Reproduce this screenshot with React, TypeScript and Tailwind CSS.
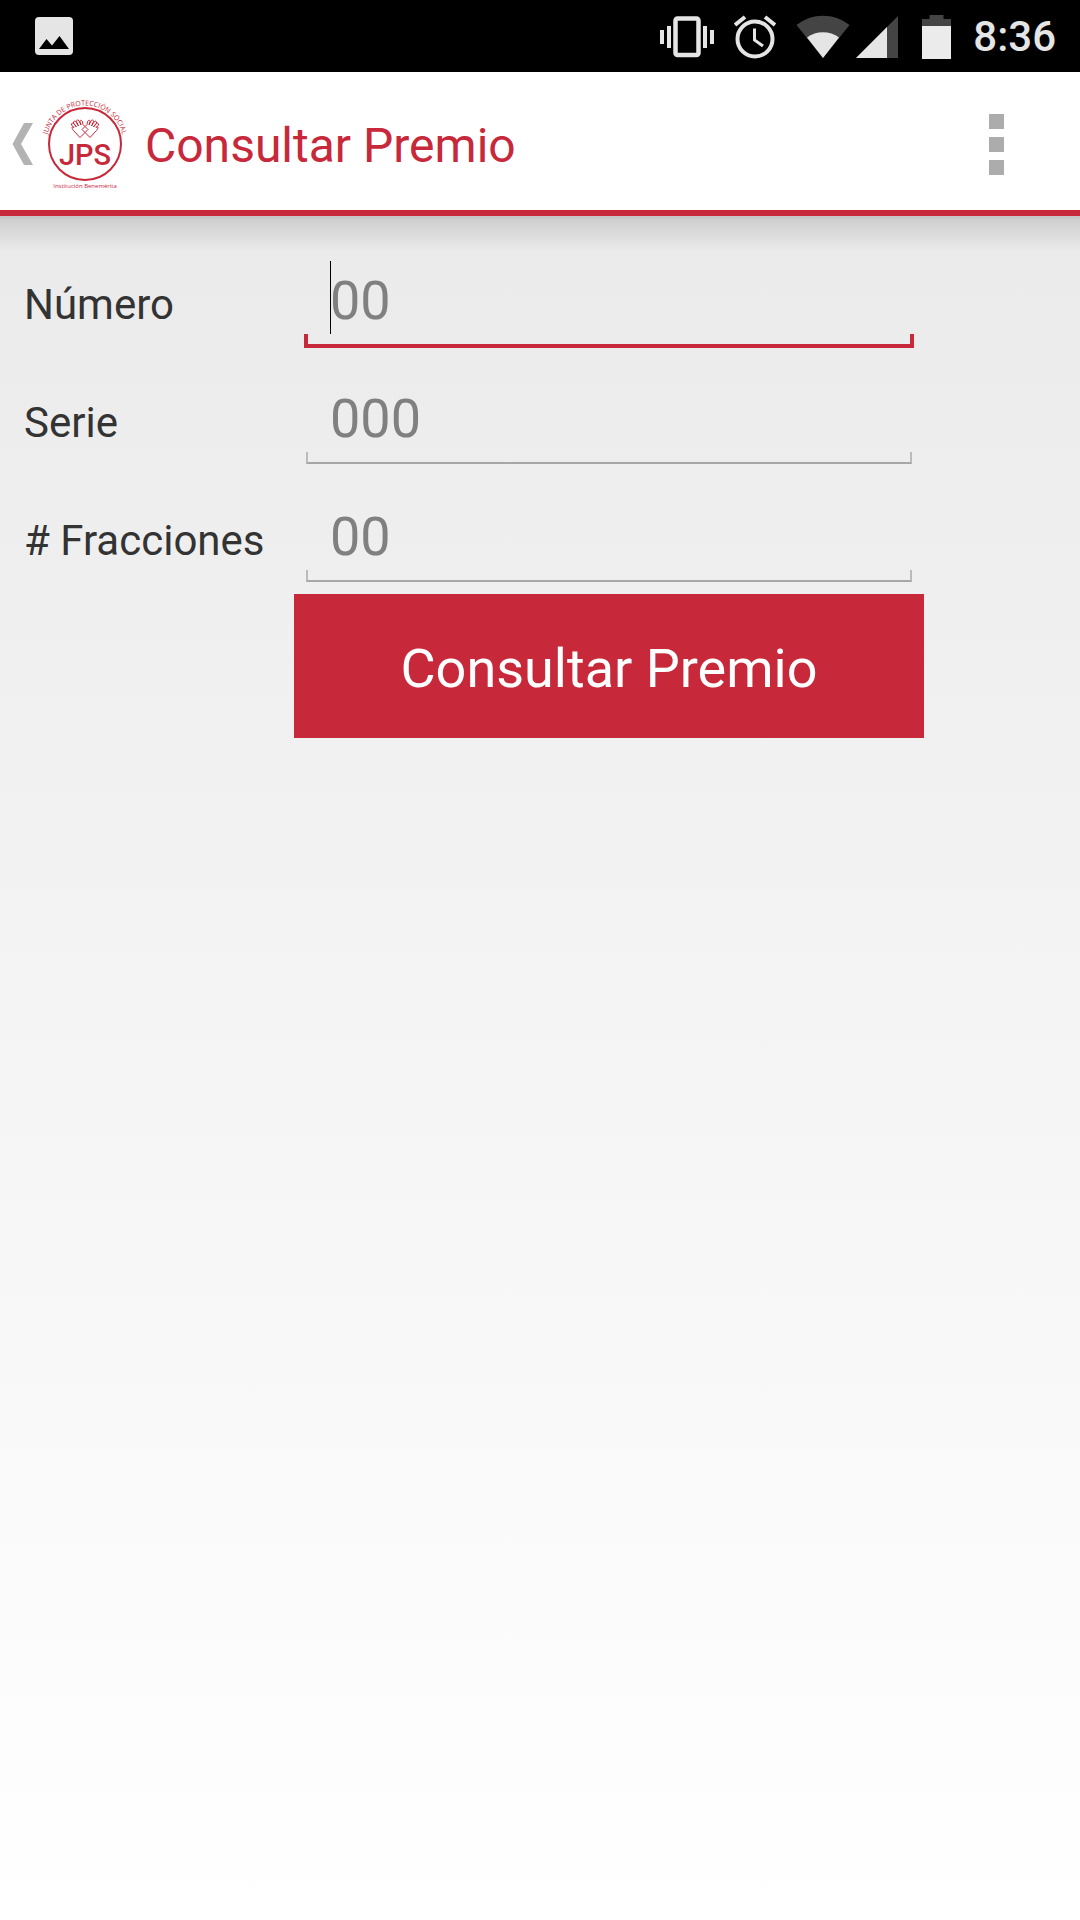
import React from "react";

const RED = "#c7283a";

function PictureIcon() {
  return (
    <svg width="38" height="38" viewBox="0 0 38 38" aria-hidden="true">
      <rect width="38" height="38" rx="4" fill="#e5e5e5" />
      <path d="M4 32 L11.500 22 L17 28.500 L24.500 19 L34 32 Z" fill="#000" />
    </svg>
  );
}

function VibrateIcon() {
  return (
    <svg width="54" height="42" viewBox="0 0 54 42" fill="#e5e5e5" aria-hidden="true">
      <rect x="0" y="14" width="4" height="14" />
      <rect x="7" y="10" width="4" height="22" />
      <rect x="43" y="10" width="4" height="22" />
      <rect x="50" y="14" width="4" height="14" />
      <rect x="15.500" y="2.500" width="23" height="36.500" rx="2" fill="none" stroke="#e5e5e5" strokeWidth="4.500" />
    </svg>
  );
}

function AlarmIcon() {
  return (
    <svg width="42" height="44" viewBox="0 0 42 44" fill="none" stroke="#e5e5e5" strokeWidth="4" aria-hidden="true">
      <circle cx="21" cy="24" r="17.500" />
      <path d="M1 10 L11 2 M31 2 L41 10" />
      <path d="M20.500 13.500 V25 L29 31" strokeWidth="3" />
    </svg>
  );
}

function WifiIcon() {
  return (
    <svg width="54" height="44" viewBox="0 0 54 44" aria-hidden="true">
      <path d="M0.500 10 C16 -2.500 38 -2.500 53.500 10 L27 43 Z" fill="#444" />
      <path d="M11 22.500 C20 15.500 34 15.500 43 22.500 L27 43 Z" fill="#e5e5e5" />
    </svg>
  );
}

function SignalIcon() {
  return (
    <svg width="42" height="42" viewBox="0 0 42 42" aria-hidden="true">
      <path d="M42 0 V42 H0 Z" fill="#444" />
      <path d="M31 11 V42 H0 Z" fill="#e5e5e5" />
    </svg>
  );
}

function BatteryIcon() {
  return (
    <svg width="29" height="44" viewBox="0 0 29 44" aria-hidden="true">
      <path d="M7.500 0 H21.500 V4 H29 V11 H0 V4 H7.500 Z" fill="#444" />
      <rect y="11" width="29" height="33" fill="#ebebeb" />
    </svg>
  );
}

function Hand() {
  return (
    <path d="M45 36.500 L40 41.500 L33.500 34.500 C31 31.500 32 30 34 31.500 L31.500 29 C31 27 33 26.500 34 28 L36.500 31 L33.500 27 C33 25 35 24.500 36 26 L38.500 30 L36.500 25.500 C36.500 23.500 38.500 23.500 39 25 L41 29 L40 25.500 C40 23.500 42 24 42.500 26 L43 28.500 L45 30.500 L42 33.500 L45 36.500" />
  );
}

function Logo() {
  return (
    <svg width="90" height="96" viewBox="0 0 90 96" role="img" aria-label="JPS" fill={RED}>
      <defs>
        <path id="logo-arc" d="M17.800 75.200 A38.500 38.500 0 1 1 72.200 75.200" />
      </defs>
      <circle cx="45" cy="48" r="36" fill="none" stroke={RED} strokeWidth="2" />
      <text fontSize="7" className="font-['Open_Sans']">
        <textPath href="#logo-arc" startOffset="50%" textAnchor="middle">
          JUNTA DE PROTECCIÓN SOCIAL
        </textPath>
      </text>
      <g fill="none" stroke={RED} strokeWidth="1" strokeLinejoin="round">
        <Hand />
        <g transform="matrix(-1 0 0 1 90 0)">
          <Hand />
        </g>
      </g>
      <text x="45" y="69" fontSize="29" textAnchor="middle" className="font-['Roboto'] font-medium">
        JPS
      </text>
      <text x="45" y="92" fontSize="6" textAnchor="middle" className="font-['Open_Sans']">
        Institución Benemérita
      </text>
    </svg>
  );
}

function StatusBar() {
  return (
    <div className="flex h-[72px] items-center justify-between bg-black pr-6 pl-[35px] text-[#e5e5e5]">
      <PictureIcon />
      <div className="flex items-center pt-0.5">
        <VibrateIcon />
        <div className="ml-5">
          <AlarmIcon />
        </div>
        <div className="ml-5">
          <WifiIcon />
        </div>
        <div className="ml-1.5">
          <SignalIcon />
        </div>
        <div className="ml-6">
          <BatteryIcon />
        </div>
        <span className="ml-[22px] text-[42px] leading-[50px] font-medium">8:36</span>
      </div>
    </div>
  );
}

function AppBar() {
  return (
    <header className="relative z-10 flex h-36 items-center border-b-6 border-[#c7283a] bg-white pt-1.5">
      <button type="button" aria-label="Volver" className="flex items-center pl-3">
        <svg width="22" height="42" viewBox="0 0 22 42" aria-hidden="true">
          <path d="M12 0 H21 L9 21 L21 42 H12 L0.500 21 Z" fill="#b3b3b3" />
        </svg>
        <span className="ml-1.5">
          <Logo />
        </span>
      </button>
      <h1 className="ml-[15px] flex-1 pt-1 text-[48px] leading-[56px] text-[#c7283a]">Consultar Premio</h1>
      <button type="button" aria-label="Más opciones" className="mr-[60px] flex flex-col gap-2 px-4">
        <span className="size-[15px] bg-[#acacac]" />
        <span className="size-[15px] bg-[#acacac]" />
        <span className="size-[15px] bg-[#acacac]" />
      </button>
      <div className="pointer-events-none absolute inset-x-0 top-full mt-1.5 h-9 border-t-3 border-black/15 bg-linear-to-b from-black/12 to-transparent" />
    </header>
  );
}

type FieldProps = { id: string; label: string; placeholder: string; active?: boolean };

function Field({ id, label, placeholder, active = false }: FieldProps) {
  return (
    <div className="grid grid-cols-[294px_1fr] items-baseline">
      <label htmlFor={id} className="pl-6 text-[42px] leading-[50px] text-[#333]">
        {label}
      </label>
      <div className="relative flex">
        <input
          id={id}
          type="text"
          inputMode="numeric"
          placeholder={placeholder}
          className="h-[118px] w-full bg-transparent px-9 pt-0.5 text-[54px] text-[#333] outline-none placeholder:text-[#808080]"
        />
        {active ? (
          <>
            <span className="pointer-events-none absolute inset-x-2.5 bottom-2.5 h-3.5 border-4 border-t-0 border-[#c7283a]" />
            <span className="pointer-events-none absolute top-[21px] left-9 h-[73px] w-px bg-black" />
          </>
        ) : (
          <span className="pointer-events-none absolute inset-x-3 bottom-3 h-3 border-x-2 border-b-2 border-x-[#bbb] border-b-[#a6a6a6]" />
        )}
      </div>
    </div>
  );
}

export default function App() {
  return (
    <div className="flex min-h-screen flex-col bg-linear-to-b from-[#e8e8e8] to-white font-['Roboto',sans-serif]">
      <StatusBar />
      <AppBar />
      <main className="pt-6">
        <form className="pr-[156px]" onSubmit={(event) => event.preventDefault()}>
          <Field id="numero" label="Número" placeholder="00" active />
          <Field id="serie" label="Serie" placeholder="000" />
          <Field id="fracciones" label="# Fracciones" placeholder="00" />
          <div className="pl-[294px]">
            <button type="submit" className="h-36 w-full bg-[#c7283a] pt-1 text-[54px] text-white">
              Consultar Premio
            </button>
          </div>
        </form>
      </main>
    </div>
  );
}
